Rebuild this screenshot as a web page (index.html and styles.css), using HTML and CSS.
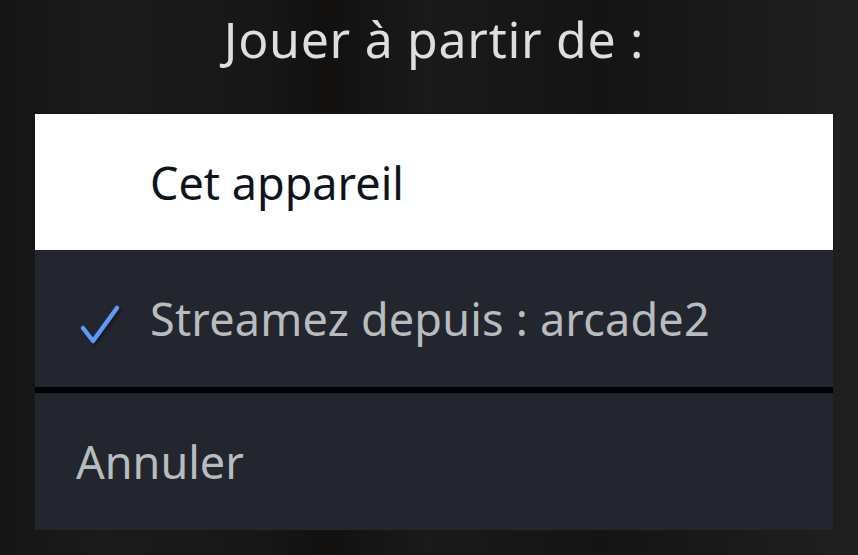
FILE: index.html
```html
<!DOCTYPE html>
<html lang="fr">
<head>
<meta charset="utf-8">
<title>Jouer à partir de</title>
<link rel="stylesheet" href="styles.css">
</head>
<body>
<div class="dialog">
  <div class="title">Jouer à partir de :</div>
  <div class="options">
    <div class="row row-focus"><span class="mark"></span><span class="label">Cet appareil</span></div>
    <div class="row"><span class="mark"><svg viewBox="0 0 40 48" width="40" height="48"><path class="shadow" d="M5 35 L15 48 L39 15" /><path class="tick" d="M3 33 L13 46 L37 13" /></svg></span><span class="label label-wide">Streamez depuis : arcade2</span></div>
  </div>
  <div class="row cancel"><span class="label">Annuler</span></div>
</div>
</body>
</html>
```
FILE: styles.css
```css
html, body {
  margin: 0;
  padding: 0;
}
body {
  width: 858px;
  height: 555px;
  overflow: hidden;
  font-family: "Noto Sans", "Open Sans", sans-serif;
  background:
    linear-gradient(90deg, #151515 0%, #1b1b1b 12%, #171717 30%, #121110 38%, #1a1a1a 50%, #141414 70%, #1c1c1c 90%, #1f1f1f 100%);
}
.dialog {
  width: 798px;
  margin-left: 35px;
  display: flex;
  flex-direction: column;
}
.title {
  height: 114px;
  box-sizing: border-box;
  padding-top: 8px;
  text-align: center;
  color: #dcdedf;
  font-size: 50px;
  letter-spacing: 0.7px;
  line-height: 62px;
}
.options {
  display: flex;
  flex-direction: column;
  border-bottom: 6px solid #000;
}
.row {
  height: 137px;
  display: flex;
  align-items: center;
  background: #23262e;
  color: #b8bcbf;
  font-size: 45px;
}
.row-focus {
  height: 136px;
  background: #ffffff;
  color: #0e141b;
}
.mark {
  width: 115px;
  flex: none;
  display: flex;
  justify-content: flex-end;
}
.mark svg {
  display: block;
  overflow: visible;
  margin-right: 30px;
}
.tick, .shadow {
  fill: none;
  stroke-width: 4.5;
  stroke-linecap: round;
  stroke-linejoin: round;
}
.tick { stroke: #5b9bf5; }
.shadow { stroke: rgba(0,0,0,0.35); filter: blur(1.5px); }
.label {
  white-space: nowrap;
}
.label-wide {
  letter-spacing: 0.2px;
}
.cancel .label {
  padding-left: 41px;
}
```
